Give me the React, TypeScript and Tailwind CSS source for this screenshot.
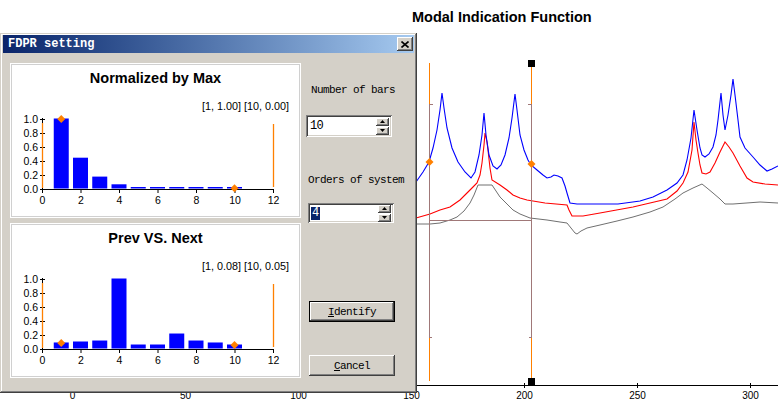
import React from "react";

const SANS = { fontFamily: '"Liberation Sans", Arial, sans-serif' };
const MONO = { fontFamily: '"Liberation Mono", "Courier New", monospace' };

const raised =
  "bg-[#d4d0c8] shadow-[inset_-1px_-1px_#404040,inset_1px_1px_#ffffff,inset_-2px_-2px_#808080,inset_2px_2px_#d4d0c8]";
const sunken =
  "bg-white shadow-[inset_1px_1px_#808080,inset_-1px_-1px_#ffffff,inset_2px_2px_#404040,inset_-2px_-2px_#d4d0c8]";

const BX = (i: number) => 42 + 19.25 * i;
const BY = (v: number) => 189 - v * 70;

function Diamond({ cx, cy }: { cx: number; cy: number }) {
  return (
    <polygon
      points={`${cx},${cy - 4} ${cx + 4},${cy} ${cx},${cy + 4} ${cx - 4},${cy}`}
      fill="#ff8000"
    />
  );
}

function MiniChart({
  title,
  note,
  values,
  d1,
  d2,
}: {
  title: string;
  note: string;
  values: number[];
  d1: number;
  d2: number;
}) {
  const ticksY = [0, 0.2, 0.4, 0.6, 0.8, 1.0];
  const ticksX = [0, 2, 4, 6, 8, 10, 12];
  return (
    <div className="w-[291px] h-[155px] border border-white bg-white shadow-[inset_0_0_0_1px_#d0d0d0] flex flex-col">
      <div
        className="h-[24px] pt-[6px] text-center font-bold text-[14.5px] leading-[17px] text-black"
        style={SANS}
      >
        {title}
      </div>
      <svg width={289} height={128} viewBox="11 88 289 128" style={SANS}>
        <text x={289} y={110} textAnchor="end" fontSize={10.8} fill="#000">
          {note}
        </text>
        {values.map((v, i) => {
          const h = Math.max(v * 70, 1.5);
          return (
            <rect
              key={i}
              x={BX(i + 1) - 7.5}
              y={188.5 - h}
              width={15}
              height={h}
              fill="#0000ff"
            />
          );
        })}
        <line x1={42.5} y1={118} x2={42.5} y2={189} stroke="#000" />
        {ticksY.map((t) => (
          <g key={t}>
            <line x1={40} y1={BY(t) + 0.5} x2={45} y2={BY(t) + 0.5} stroke="#000" />
            <text x={38} y={BY(t) + 4} textAnchor="end" fontSize={10.5} fill="#000">
              {t.toFixed(1)}
            </text>
          </g>
        ))}
        <line x1={42} y1={189.5} x2={274} y2={189.5} stroke="#000" />
        {ticksX.map((t) => (
          <g key={t}>
            <line x1={BX(t) + 0.5} y1={189} x2={BX(t) + 0.5} y2={193} stroke="#000" />
            <text x={BX(t) + 0.5} y={204} textAnchor="middle" fontSize={10.5} fill="#000">
              {t}
            </text>
          </g>
        ))}
        <line x1={42.5} y1={123} x2={42.5} y2={188} stroke="#ff8000" strokeWidth={1.3} />
        <line x1={273.5} y1={124} x2={273.5} y2={187} stroke="#ff8000" strokeWidth={1.3} />
        <Diamond cx={BX(1)} cy={BY(d1)} />
        <Diamond cx={BX(10)} cy={BY(d2)} />
      </svg>
    </div>
  );
}

function Spinner() {
  return (
    <div className="flex flex-col gap-[1px]">
      <div className={`w-[13px] h-[8px] ${raised} flex items-center justify-center`}>
        <svg width="5" height="3" viewBox="0 0 5 3">
          <polygon points="2.5,0 5,3 0,3" fill="#000" />
        </svg>
      </div>
      <div className={`w-[13px] h-[8px] ${raised} flex items-center justify-center`}>
        <svg width="5" height="3" viewBox="0 0 5 3">
          <polygon points="0,0 5,0 2.5,3" fill="#000" />
        </svg>
      </div>
    </div>
  );
}

const blue =
  "416,182 423,172 429,162 433,148 437,130 440,110 442,93 444,108 447,128 452,148 458,162 465,172 471,178 475,172 479,155 482,135 484,113 486,135 489,155 493,166 497,169 501,165 505,155 509,138 512,118 515,94 517,110 520,135 524,150 528,160 531,165 537,170 543,175 547,178 551,177 554,175 558,176 562,178 565,186 567,193 570,203 577,204 618,204 640,201 653,197 667,190 677,183 683,175 687,160 691,138 694,110 697,130 700,148 702,155 705,157 709,154 713,147 716,135 718,120 721,93 723,115 725,130 728,115 731,95 733,79 735,95 738,120 740,137 745,148 753,157 760,165 767,171 772,169 778,166";
const red =
  "416,218 430,214 440,210 450,207 460,200 467,193 473,187 477,183 480,175 482,163 484,145 485,133 487,142 488,150 490,168 492,180 500,185 507,190 513,195 520,198 527,200 545,203 567,205 569,210 572,216 583,216 600,213 633,207 650,203 667,199 677,191 683,183 688,172 692,150 694,122 696,140 698,153 700,165 702,173 706,174 710,172 715,163 720,152 725,142 729,147 733,153 740,166 747,178 753,182 765,184 778,185";
const gray =
  "416,224 430,224 440,223 450,220 457,217 464,211 470,203 474,195 478,185 492,185 496,191 500,197 507,204 513,210 520,214 530,218 547,220 560,222 567,223 571,228 575,233 577,234 581,231 587,228 600,225 617,221 633,217 650,212 663,207 675,199 683,193 693,188 702,184 707,188 713,193 720,199 725,204 733,204 760,202 778,203";

const XP = (v: number) => 411 + (v - 150) * 2.26;

function BigChart() {
  return (
    <svg width={778} height={375} viewBox="0 35 778 375" style={SANS}>
      <polyline points={gray} fill="none" stroke="#707070" strokeWidth={1} />
      <polyline points={red} fill="none" stroke="#ff0000" strokeWidth={1.1} />
      <polyline points={blue} fill="none" stroke="#0000ff" strokeWidth={1.1} />
      <line x1={429.5} y1={104} x2={429.5} y2={337} stroke="#a07878" />
      <line x1={531.5} y1={104} x2={531.5} y2={337} stroke="#a07878" />
      <line x1={429.5} y1={63} x2={429.5} y2={104} stroke="#ff8000" />
      <line x1={429.5} y1={337} x2={429.5} y2={381} stroke="#ff8000" />
      <line x1={531.5} y1={66} x2={531.5} y2={104} stroke="#ff8000" />
      <line x1={531.5} y1={337} x2={531.5} y2={379} stroke="#ff8000" />
      <line x1={429} y1={104.5} x2={433} y2={104.5} stroke="#a07878" />
      <line x1={429} y1={337.5} x2={432} y2={337.5} stroke="#a07878" />
      <line x1={528} y1={104.5} x2={532} y2={104.5} stroke="#a07878" />
      <line x1={529} y1={337.5} x2={532} y2={337.5} stroke="#a07878" />
      <line x1={429} y1={220.5} x2={532} y2={220.5} stroke="#a07878" />
      <rect x={528} y={60} width={7} height={7} fill="#000" />
      <rect x={528} y={378} width={7} height={7} fill="#000" />
      <Diamond cx={429.5} cy={162} />
      <Diamond cx={531.5} cy={164} />
      <line x1={0} y1={385.5} x2={778} y2={385.5} stroke="#000" />
      {[0, 50, 100, 150, 200, 250, 300].map((v) => (
        <g key={v}>
          <line x1={XP(v) + 0.5} y1={383} x2={XP(v) + 0.5} y2={388} stroke="#000" />
          <text x={XP(v) + 0.5} y={399} textAnchor="middle" fontSize={10} fill="#000">
            {v}
          </text>
        </g>
      ))}
    </svg>
  );
}

export default function App() {
  return (
    <div className="relative w-[778px] h-[410px] bg-white overflow-hidden">
      <div
        className="h-[35px] pl-[412px] pt-[9px] font-bold text-[14.5px] leading-[17px] text-black"
        style={SANS}
      >
        Modal Indication Function
      </div>
      <BigChart />

      <div className="absolute left-0 top-[33px] w-[417px] h-[360px] bg-[#d4d0c8] shadow-[inset_-1px_-1px_#404040,inset_1px_1px_#d4d0c8,inset_-2px_-2px_#808080,inset_2px_2px_#ffffff] pt-[2px] px-[3px] flex flex-col">
        <div className="h-[18px] bg-linear-to-r from-[#0a246a] to-[#a6caf0] flex items-center justify-between pl-[5px] pr-[1px]">
          <span className="text-white font-bold text-[12px] leading-[14px]" style={MONO}>
            FDPR setting
          </span>
          <div className={`w-[16px] h-[14px] ${raised} flex items-center justify-center`}>
            <svg width="8" height="7" viewBox="0 0 8 7">
              <path d="M0.5 0.5 L7.5 6.5 M7.5 0.5 L0.5 6.5" stroke="#000" strokeWidth="1.6" />
            </svg>
          </div>
        </div>
        <div className="flex">
          <div className="pl-[7px] pt-[10px] flex flex-col gap-[5px]">
            <MiniChart
              title="Normalized by Max"
              note="[1, 1.00] [10, 0.00]"
              values={[1.0, 0.44, 0.17, 0.06, 0.012, 0.012, 0.012, 0.012, 0.012, 0.012]}
              d1={1.0}
              d2={0.01}
            />
            <MiniChart
              title="Prev VS. Next"
              note="[1, 0.08] [10, 0.05]"
              values={[0.086, 0.1, 0.114, 1.0, 0.057, 0.057, 0.214, 0.114, 0.086, 0.057]}
              d1={0.086}
              d2={0.057}
            />
          </div>
          <div className="flex flex-col text-[11px] leading-[12px] tracking-[-0.6px] text-black" style={MONO}>
            <div className="mt-[31px] ml-[10px]">Number of bars</div>
            <div className={`mt-[19px] ml-[5px] w-[86px] h-[22px] ${sunken} flex items-center justify-between pl-[4px] pr-[3px]`}>
              <span className="text-[12px]">10</span>
              <Spinner />
            </div>
            <div className="mt-[37px] ml-[7px] whitespace-nowrap">Orders of system</div>
            <div className={`mt-[17px] ml-[7px] w-[86px] h-[20px] ${sunken} flex items-center justify-between pl-[3px] pr-[3px]`}>
              <span className="text-[12px] leading-[13px] bg-[#0a246a] text-white px-[1px]">4</span>
              <Spinner />
            </div>
            <div className={`mt-[78px] ml-[8px] w-[86px] h-[21px] border border-black ${raised} flex items-center justify-center`}>
              <span>
                <span className="underline">I</span>dentify
              </span>
            </div>
            <div className={`mt-[33px] ml-[8px] w-[86px] h-[21px] ${raised} flex items-center justify-center`}>
              <span>
                <span className="underline">C</span>ancel
              </span>
            </div>
          </div>
        </div>
      </div>
    </div>
  );
}
